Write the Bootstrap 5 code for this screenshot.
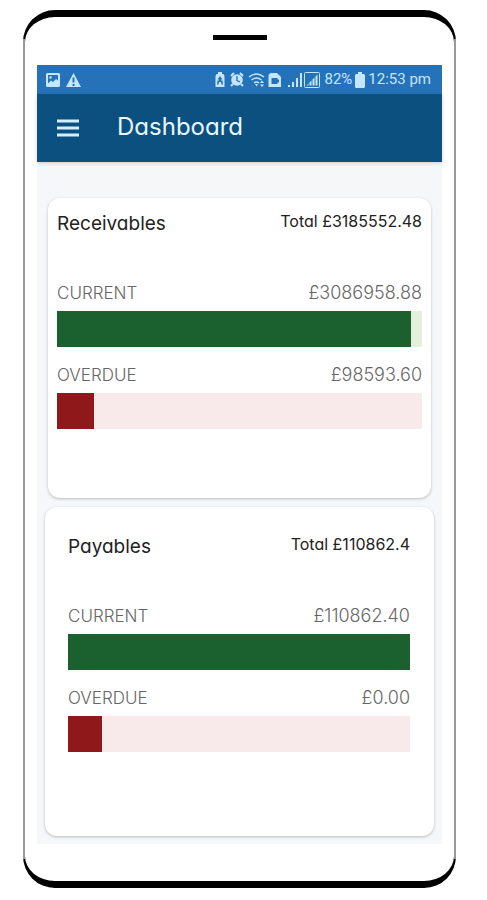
<!DOCTYPE html>
<html lang="en">
<head>
<meta charset="utf-8">
<meta name="viewport" content="width=device-width, initial-scale=1">
<title>Dashboard</title>
<link href="https://cdn.jsdelivr.net/npm/bootstrap@5.3.0/dist/css/bootstrap.min.css" rel="stylesheet">
<style>
  body { background: #fff; font-family: Inter, "Liberation Sans", sans-serif; font-feature-settings: "cv11"; color: #222; }
  .stage { padding: 10px 31px 12px 23px; }
  .phone { position: relative; border: solid #000; border-width: 7px 2px; border-radius: 32px; padding: 18px 12px 37px; }
  .phone::before { content: ""; position: absolute; inset: 22px -2px; border: solid #999; border-width: 0 2px; pointer-events: none; }
  .speaker { width: 54px; height: 5px; background: #000; margin-bottom: 25px; }
  .screen { background: #f6f7f8; padding-bottom: 8px; }
  .status { height: 29px; background: #2672b9; color: #c4e6ff; font: 15px/29px Roboto, sans-serif; padding: 0 11px 0 9px; }
  .status svg { display: block; }
  .status-right { gap: 3px; }
  .topbar { height: 68px; background: #0c5080; padding: 0 20px; gap: 38px; box-shadow: 0 1px 4px rgba(0,0,0,.18); margin-bottom: 36px; }
  .topbar h1 { font-size: 24px; line-height: 32px; color: #e8f7ff; font-weight: 400; padding-bottom: 3px; }
  .menu-btn { line-height: 0; }
  .tile { border: 0; border-radius: 12px; box-shadow: 0 1px 3px rgba(0,0,0,.25); }
  .tile-receive { margin: 0 11px 9px; padding: 10px 9px 69px; }
  .tile-pay { margin: 0 8px; padding: 24px 24px 84px 23px; }
  .tile-head { height: 30px; margin-bottom: 41px; }
  .tile-head h2 { font-size: 19px; line-height: 32px; font-weight: 400; }
  .total { font-size: 16px; line-height: 26px; }
  .meter-row { font-size: 18px; line-height: 28px; font-weight: 300; color: #666; margin-bottom: 4px; }
  .meter-name { font-size: 17px; }
  .meter { height: 36px; border-radius: 0; }
  .meter + .meter-row { margin-top: 14px; }
  .meter-green { background: #e5f0da; }
  .meter-green .progress-bar { background: #1b612f; }
  .meter-red { background: #f8e9eb; }
  .meter-red .progress-bar { background: #8f181b; }
</style>
<script src="https://cdn.jsdelivr.net/npm/bootstrap@5.3.0/dist/js/bootstrap.bundle.min.js"></script>
</head>
<body>
<div class="stage">
  <div class="phone">
    <div class="speaker mx-auto"></div>
    <div class="screen">
      <div class="status d-flex align-items-center justify-content-between">
        <svg width="36" height="16" viewBox="0 0 36 16" fill="#c4e6ff" aria-hidden="true">
          <path fill-rule="evenodd" d="M1.500 1h11a1.500 1.500 0 0 1 1.500 1.500v11a1.500 1.500 0 0 1-1.500 1.500h-11a1.500 1.500 0 0 1-1.500-1.500v-11a1.500 1.500 0 0 1 1.500-1.500zM2 3v8.500l3-3 2 1.500 3-3 2 1.500V3z"/>
          <circle cx="4.500" cy="5.500" r="1.200"/><path d="M2 12l3-2 2 1 3-3 2 2v2z"/>
          <path fill-rule="evenodd" d="M27.500 1l7.500 14h-15zM26.500 5.500v5h2v-5zm0 6.500v2h2v-2z"/>
        </svg>
        <div class="status-right d-flex align-items-center">
          <svg width="106" height="18" viewBox="0 0 106 18" fill="#c4e6ff" aria-hidden="true">
            <path fill-rule="evenodd" d="M3 1h4v2h1.500l1 2v11h-9V5l1-2H3zM5 5L2.500 8.500h1.500v1H2.500L2 13.500h1.500L4 11h2l.5 2.500H8L7.500 9.500H6v-1h1.500z"/>
            <circle cx="22" cy="9" r="5.800"/><path d="M16 5l3-3M28 5l-3-3M18 13l-2 2M26 13l2 2" stroke="#c4e6ff" stroke-width="2"/>
            <path d="M22 5v4.500l3 1.500" fill="none" stroke="#2672b9" stroke-width="1.300"/>
            <g fill="none" stroke="#c4e6ff" stroke-width="1.500"><path d="M34 6q7.500-6 15 0M36.500 9q5-4 10 0M39 12q2.500-2 5 0"/></g>
            <path d="M40 13h3l-1.500 2.500zM45 12l2-2.500 2 2.500zm0 1.500h4l-2 2.500z"/>
            <path fill-rule="evenodd" d="M55.500 2H62l4 4v10H53.500V4zM56.500 7v6h6v-1.500h1.500v-3h-1.500V7z"/>
            <path d="M73 14h2v2h-2zM77 11h2v5h-2zM81 7h2v9h-2zM85 2h2v14h-2z"/>
            <rect x="89.500" y="1.500" width="15" height="15" rx="1" fill="none" stroke="#c4e6ff"/>
            <path d="M91.500 14.500h2v-2zM94.500 11.500l2-2v5h-2zM97.500 8.500l2-2v8h-2zM100.500 5.500l2-2v11h-2z"/>
          </svg>
          <span>82%</span>
          <svg width="10" height="16" viewBox="0 0 10 16" fill="#c4e6ff" aria-hidden="true"><path d="M3 0h4v2h2l1 1v12l-1 1H1l-1-1V3l1-1h2z"/></svg>
          <span>12:53 pm</span>
        </div>
      </div>
      <header class="topbar d-flex align-items-center">
        <button type="button" class="menu-btn btn p-0 border-0" aria-label="Menu">
          <svg width="22" height="18" viewBox="0 0 22 18" aria-hidden="true"><path d="M0 2h22M0 9h22M0 16h22" stroke="#d5efff" stroke-width="3"/></svg>
        </button>
        <h1 class="m-0">Dashboard</h1>
      </header>
      <main>
        <section class="tile tile-receive card">
          <div class="tile-head d-flex justify-content-between">
            <h2>Receivables</h2><span class="total">Total £3185552.48</span>
          </div>
          <div class="meter-row d-flex justify-content-between"><span class="meter-name">CURRENT</span><span>£3086958.88</span></div>
          <div class="meter meter-green progress" role="progressbar" aria-label="Receivables current" aria-valuenow="97" aria-valuemin="0" aria-valuemax="100"><div class="progress-bar" style="width: 97%"></div></div>
          <div class="meter-row d-flex justify-content-between"><span class="meter-name">OVERDUE</span><span>£98593.60</span></div>
          <div class="meter meter-red progress" role="progressbar" aria-label="Receivables overdue" aria-valuenow="10" aria-valuemin="0" aria-valuemax="100"><div class="progress-bar" style="width: 10%"></div></div>
        </section>
        <section class="tile tile-pay card">
          <div class="tile-head d-flex justify-content-between">
            <h2>Payables</h2><span class="total">Total £110862.4</span>
          </div>
          <div class="meter-row d-flex justify-content-between"><span class="meter-name">CURRENT</span><span>£110862.40</span></div>
          <div class="meter meter-green progress" role="progressbar" aria-label="Payables current" aria-valuenow="100" aria-valuemin="0" aria-valuemax="100"><div class="progress-bar" style="width: 100%"></div></div>
          <div class="meter-row d-flex justify-content-between"><span class="meter-name">OVERDUE</span><span>£0.00</span></div>
          <div class="meter meter-red progress" role="progressbar" aria-label="Payables overdue" aria-valuenow="10" aria-valuemin="0" aria-valuemax="100"><div class="progress-bar" style="width: 10%"></div></div>
        </section>
      </main>
    </div>
  </div>
</div>
</body>
</html>
